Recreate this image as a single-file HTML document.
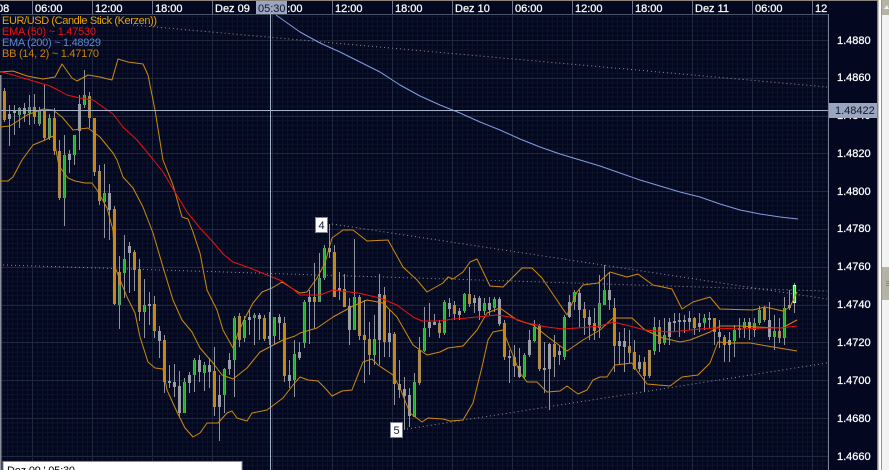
<!DOCTYPE html>
<html><head><meta charset="utf-8"><style>
html,body{margin:0;padding:0;width:889px;height:470px;overflow:hidden;background:#030820}
svg{display:block}
text{font-family:"Liberation Sans",sans-serif;font-size:11px}
.w text{stroke:#fff;stroke-width:.25px}
</style></head><body>
<svg width="889" height="470" viewBox="0 0 889 470" xmlns="http://www.w3.org/2000/svg">
<defs>
<pattern id="gv" width="5" height="470" patternUnits="userSpaceOnUse" x="2"><rect width="1" height="470" fill="#0c1329"/></pattern>
<pattern id="gh" width="829" height="4.725" patternUnits="userSpaceOnUse" y="2"><rect width="829" height="1" fill="#0c1329"/></pattern>
<path id="o" d="M4.5 91V120M34.5 107V117M44.5 110V138M54.5 118V151M59.5 151V198M89.5 96V118M94.5 118V172M99.5 171V201M114.5 209V304M119.5 272V285M134.5 252V270M139.5 269V312M154.5 304V331M164.5 340V382M214.5 371V407M239.5 316V340M264.5 318V339M284.5 323V376M314.5 297V302M334.5 252V297M344.5 289V307M359.5 297V336M364.5 335V340M369.5 339V355M384.5 295V342M394.5 334V384M419.5 350V383M439.5 323V333M454.5 305V314M469.5 294V304M504.5 323V357M514.5 357V366M539.5 326V369M554.5 344V357M584.5 309V318M594.5 323V331M614.5 308V346M629.5 346V353M634.5 352V369M644.5 362V376M649.5 350V376M659.5 327V344M694.5 318V328M714.5 318V332M724.5 337V345M764.5 308V320M779.5 331V338"/>
<path id="g" d="M19.5 108V115M29.5 107V113M39.5 110V124M49.5 118V138M64.5 155V198M74.5 135V155M84.5 95V105M104.5 193V202M119.5 285V305M124.5 259V273M144.5 305V312M184.5 382V413M194.5 360V375M204.5 365V373M224.5 369V395M234.5 318V360M244.5 320V338M254.5 315V318M274.5 317V336M294.5 354V380M304.5 302V343M319.5 278V302M324.5 248V278M354.5 297V330M374.5 339V355M414.5 382V417M424.5 328V351M444.5 302V333M464.5 294V311M484.5 303V311M494.5 299V308M524.5 355V377M534.5 327V341M564.5 317V357M574.5 292V302M599.5 303V328M604.5 290V305M654.5 327V351M664.5 335V343M704.5 318V323M734.5 330V341M744.5 322V328M754.5 323V330M759.5 310V323M774.5 331V337M784.5 308V338"/>
</defs>
<rect width="889" height="470" fill="#030820"/>
<rect x="1" y="14" width="827" height="456" fill="url(#gv)"/>
<rect x="1" y="14" width="827" height="456" fill="url(#gh)"/>
<path d="M32.5 14V470M92.5 14V470M152.5 14V470M212.5 14V470M272.5 14V470M332.5 14V470M392.5 14V470M452.5 14V470M512.5 14V470M572.5 14V470M632.5 14V470M692.5 14V470M752.5 14V470M812.5 14V470M1 40.5H828M1 78.5H828M1 116.5H828M1 153.5H828M1 191.5H828M1 229.5H828M1 267.5H828M1 305.5H828M1 342.5H828M1 380.5H828M1 418.5H828M1 456.5H828" stroke="#20283e" stroke-width="1" fill="none"/>
<!-- top axis -->
<rect x="0" y="0" width="878" height="1" fill="#8a8478"/>
<path d="M32.5 1V14M92.5 1V14M152.5 1V14M212.5 1V14M332.5 1V14M392.5 1V14M452.5 1V14M512.5 1V14M572.5 1V14M632.5 1V14M692.5 1V14M752.5 1V14M812.5 1V14" stroke="#6f788e" stroke-width="1"/>
<rect x="1" y="14" width="828" height="1" fill="#4a5268"/>
<rect x="828" y="14" width="1" height="456" fill="#7a8296"/>
<rect x="0" y="75" width="1.5" height="395" fill="#8a8d95"/>
<g fill="#fff" class="w">
<text x="-3" y="12">08</text><text x="35" y="12">06:00</text><text x="95" y="12">12:00</text><text x="155" y="12">18:00</text><text x="215" y="12">Dez 09</text><text x="275" y="12">06:00</text><text x="335" y="12">12:00</text><text x="395" y="12">18:00</text><text x="455" y="12">Dez 10</text><text x="515" y="12">06:00</text><text x="575" y="12">12:00</text><text x="635" y="12">18:00</text><text x="695" y="12">Dez 11</text><text x="755" y="12">06:00</text><text x="815" y="12">12</text>
</g>
<rect x="256" y="1" width="31" height="13" fill="#9aa5c0"/>
<text x="258" y="12" fill="#101828">05:30</text>
<!-- price axis labels -->
<g fill="#fff" class="w">
<text x="837" y="44">1.4880</text><text x="837" y="81">1.4860</text><text x="837" y="119">1.4840</text><text x="837" y="157">1.4820</text><text x="837" y="195">1.4800</text><text x="837" y="232">1.4780</text><text x="837" y="270">1.4760</text><text x="837" y="308">1.4740</text><text x="837" y="346">1.4720</text><text x="837" y="384">1.4700</text><text x="837" y="422">1.4680</text><text x="837" y="460">1.4660</text>
</g>
<!-- dotted trend lines -->
<g stroke="#8f939c" stroke-width="1" fill="none" stroke-dasharray="1 3">
<path d="M133 25L827 87"/><path d="M3 265L827 291"/><path d="M332 224L827 299"/><path d="M407 429L827 363"/>
</g>
<!-- wicks -->
<path fill="none" stroke="#92959e" stroke-width="1" d="M4.5 88V122M9.5 105V146M14.5 105V135M19.5 107V128M24.5 103V122M29.5 95V125M34.5 94V124M39.5 107V126M44.5 85V140M49.5 114V140M54.5 108V155M59.5 140V200M64.5 135V226M69.5 150V173M74.5 135V165M79.5 95V150M84.5 70V108M89.5 92V128M94.5 118V176M99.5 165V205M104.5 164V238M109.5 184V240M114.5 206V305M119.5 256V329M124.5 235V298M129.5 242V293M134.5 250V291M139.5 259V321M144.5 279V338M149.5 292V325M154.5 296V338M159.5 326V358M164.5 335V393M169.5 365V388M174.5 364V397M179.5 371V417M184.5 378V413M189.5 372V393M194.5 358V392M199.5 355V382M204.5 362V391M209.5 358V388M214.5 347V416M219.5 375V441M224.5 368V413M229.5 353V375M234.5 316V397M239.5 313V347M244.5 316V342M249.5 310V335M254.5 313V345M259.5 313V340M264.5 315V341M269.5 312V345M274.5 317V345M279.5 314V340M284.5 317V382M289.5 360V388M294.5 340V397M299.5 342V360M304.5 300V348M309.5 290V344M314.5 263V328M319.5 253V302M324.5 245V280M329.5 224V258M334.5 245V297M339.5 272V300M344.5 274V307M349.5 298V345M354.5 239V330M359.5 295V340M364.5 300V383M369.5 322V375M374.5 315V365M379.5 274V365M384.5 287V357M389.5 310V357M394.5 332V405M399.5 360V398M404.5 377V430M409.5 388V427M414.5 373V417M419.5 337V385M424.5 307V352M429.5 303V337M434.5 314V325M439.5 320V338M444.5 300V335M449.5 298V317M454.5 301V320M459.5 308V320M464.5 293V313M469.5 267V307M474.5 295V313M479.5 296V320M484.5 298V315M489.5 297V315M494.5 297V312M499.5 297V326M504.5 320V360M509.5 350V383M514.5 345V377M519.5 348V378M524.5 353V379M529.5 330V357M534.5 320V342M539.5 324V371M544.5 342V393M549.5 343V410M554.5 335V377M559.5 345V365M564.5 315V360M569.5 295V318M574.5 290V310M579.5 290V327M584.5 302V335M589.5 310V340M594.5 308V340M599.5 275V338M604.5 265V305M609.5 272V310M614.5 298V372M619.5 332V365M624.5 328V372M629.5 330V363M634.5 340V370M639.5 355V372M644.5 357V392M649.5 350V378M654.5 317V355M659.5 320V352M664.5 318V345M669.5 318V345M674.5 313V332M679.5 313V337M684.5 315V333M689.5 311V330M694.5 317V335M699.5 313V332M704.5 314V330M709.5 312V328M714.5 318V345M719.5 320V348M724.5 335V362M729.5 332V362M734.5 325V357M739.5 318V338M744.5 318V338M749.5 318V340M754.5 318V337M759.5 306V325M764.5 306V322M769.5 302V340M774.5 315V350M779.5 318V343M784.5 297V345M789.5 290V310M794.5 283V313"/>
<!-- gray bodies -->
<path fill="none" stroke="#9a9da5" stroke-width="3" d="M9.5 114V119M14.5 110V113M24.5 108V114M69.5 154V160M79.5 104V131M109.5 193V210M129.5 246V253M149.5 304V306M159.5 331V341M169.5 381V383M174.5 382V387M179.5 386V413M189.5 375V383M199.5 360V372M209.5 365V372M219.5 395V407M229.5 360V369M249.5 317V320M259.5 315V319M269.5 336V339M279.5 317V323M289.5 375V381M299.5 352V358M309.5 297V302M329.5 248V252M339.5 288V291M349.5 306V330M379.5 294V340M389.5 333V342M399.5 384V390M404.5 389V396M409.5 395V416M429.5 322V328M434.5 322V325M449.5 303V309M459.5 311V315M474.5 298V303M479.5 298V311M489.5 303V310M499.5 299V324M509.5 356V358M519.5 366V377M529.5 340V355M544.5 368V370M549.5 344V369M559.5 351V355M569.5 302V317M579.5 293V310M589.5 317V325M609.5 290V300M619.5 341V346M624.5 341V347M639.5 362V369M669.5 322V337M674.5 321V323M679.5 320V322M684.5 320V322M689.5 318V322M699.5 323V327M709.5 318V320M719.5 332V337M729.5 340V345M739.5 328V330M749.5 322V328M769.5 320V337M789.5 305V308"/>
<use href="#o" fill="none" stroke="#8f9098" stroke-width="3"/>
<use href="#o" fill="none" stroke="#c8860a" stroke-width="2"/>
<use href="#g" fill="none" stroke="#9a9da5" stroke-width="3"/>
<use href="#g" fill="none" stroke="#18b020" stroke-width="1.8"/>
<path d="M794.5 285V303" stroke="#f2f4f8" stroke-width="3.2" fill="none"/>
<path d="M794.5 286V302" stroke="#22e030" stroke-width="1.6" fill="none"/>
<!-- BB bands -->
<g fill="none" stroke="#cf8a0c" stroke-width="1" stroke-linejoin="round">
<path d="M0 72L13 71L27 76L43 79L55 77L62 64L72 78L77 81L88 75L100 77L112 80L118 59L128 62L143 64L148 75L155 110L163 160L173 185L182 217L188 219L193 232L200 253L207 290L217 310L223 330L233 348L238 333L245 318L253 303L262 292L272 288L282 282L293 289L300 293L307 292L317 278L325 263L332 238L343 230L353 230L367 241L388 240L403 267L417 280L427 292L443 283L448 277L453 279L463 272L470 262L477 259L490 286L503 287L522 268L532 268L542 278L567 315L577 292L583 285L598 283L610 272L627 277L638 274L653 285L672 289L682 309L693 302L710 297L720 309L753 310L765 307L783 311L790 307L797 292"/>
<path d="M0 127L10 126L27 115L43 109L53 110L62 117L73 130L88 128L100 137L113 153L117 160L123 177L133 188L143 207L153 233L163 267L173 300L182 320L192 332L200 348L213 363L222 375L233 379L247 368L260 352L283 340L295 336L300 333L317 328L333 317L353 306L367 300L383 303L397 317L413 345L427 355L440 352L448 348L463 346L477 330L487 313L500 308L517 320L533 325L548 337L567 351L583 340L600 330L613 318L632 318L645 330L663 338L680 342L690 340L710 332L720 326L740 326L757 327L782 328L797 320"/>
<path d="M0 181L8 181L13 177L22 160L33 145L45 140L53 136L56 150L59 166L68 178L75 181L85 183L92 183L97 190L107 208L113 230L115 267L127 297L135 313L140 337L148 362L155 368L163 369L167 390L177 412L185 428L193 437L200 433L207 423L218 423L227 413L232 411L237 418L247 421L252 413L267 410L283 398L293 385L300 377L308 380L318 381L325 388L332 396L342 391L352 390L363 362L372 359L378 365L393 375L400 388L410 413L422 422L428 418L443 419L450 421L463 420L473 403L482 367L488 340L493 332L503 330L508 343L520 373L527 382L537 382L547 392L560 391L567 386L578 394L587 390L593 380L600 377L607 377L615 365L632 363L635 368L647 384L670 386L682 377L698 375L710 363L718 342L733 343L750 343L773 347L797 351"/>
</g>
<!-- EMA 50 -->
<path fill="none" stroke="#f01010" stroke-width="1" stroke-linejoin="round" d="M2 72L13 75L30 80L50 86L58 90L67 95L80 98L93 100L103 107L113 114L123 127L137 140L152 158L163 172L175 192L187 212L200 228L213 242L223 254L233 262L250 268L267 275L282 281L293 289L300 295L320 295L333 290L358 293L380 298L397 305L413 317L422 321L440 321L453 319L467 318L497 315L510 317L527 323L547 327L563 329L590 327L600 326L613 322L630 326L645 330L670 332L690 330L713 328L740 329L767 328L780 328L797 326"/>
<!-- EMA 200 -->
<path fill="none" stroke="#7f9ee0" stroke-width="1" stroke-linejoin="round" d="M276 15L300 32L320 43L340 52L360 62L380 72L400 85L420 96L440 105L460 113L480 122L500 130L520 139L540 147L560 154L580 160L600 166L620 173L640 180L660 186L680 192L700 197L720 204L740 210L760 214L780 217L798 219"/>
<!-- crosshair -->
<path d="M270.5 14V470M1 110.5H828" stroke="#a4afc8" stroke-width="1" fill="none"/>
<!-- price tag -->
<rect x="829" y="103" width="48" height="15" fill="#9aa5c0"/>
<text x="835" y="114" fill="#101828">1.48422</text>
<!-- legend -->
<text x="2" y="24" fill="#e8a400" textLength="155">EUR/USD (Candle Stick (Kerzen))</text>
<text x="2" y="35" fill="#f01010" textLength="94">EMA (50) ~ 1.47530</text>
<text x="2" y="46" fill="#5f86d0" textLength="99">EMA (200) ~ 1.48929</text>
<text x="2" y="57" fill="#c8820e" textLength="97">BB (14, 2) ~ 1.47170</text>
<!-- markers -->
<rect x="315.5" y="217.5" width="12" height="15" fill="#fff" stroke="#7a8296"/>
<text x="318.5" y="229" fill="#101828">4</text>
<rect x="390.5" y="422.5" width="12" height="15" fill="#fff" stroke="#7a8296"/>
<text x="393.5" y="434" fill="#101828">5</text>
<!-- tooltip -->
<rect x="3" y="461.5" width="239" height="10" fill="#fff" stroke="#8a8d95"/>
<text x="7" y="474" fill="#000" textLength="68">Dez 09 ' 05:30</text>
<!-- right strip -->
<rect x="877" y="0" width="12" height="470" fill="#fff"/>
<rect x="877" y="0" width="1.5" height="470" fill="#8a8478"/>
<rect x="881" y="0" width="1" height="470" fill="#9a968c"/>
<rect x="882" y="0" width="7" height="470" fill="#f2f2f2"/>
<rect x="882" y="0" width="7" height="15" fill="#b5b2a6"/>
<path d="M884 9L887 5L889 9Z" fill="#f2f2f2"/>
<rect x="882" y="267" width="7" height="33" fill="#b5b2a6"/>
<path d="M886 281.5H889M886 283.5H889M886 285.5H889" stroke="#8a8678" stroke-width="1"/>
</svg>
</body></html>
